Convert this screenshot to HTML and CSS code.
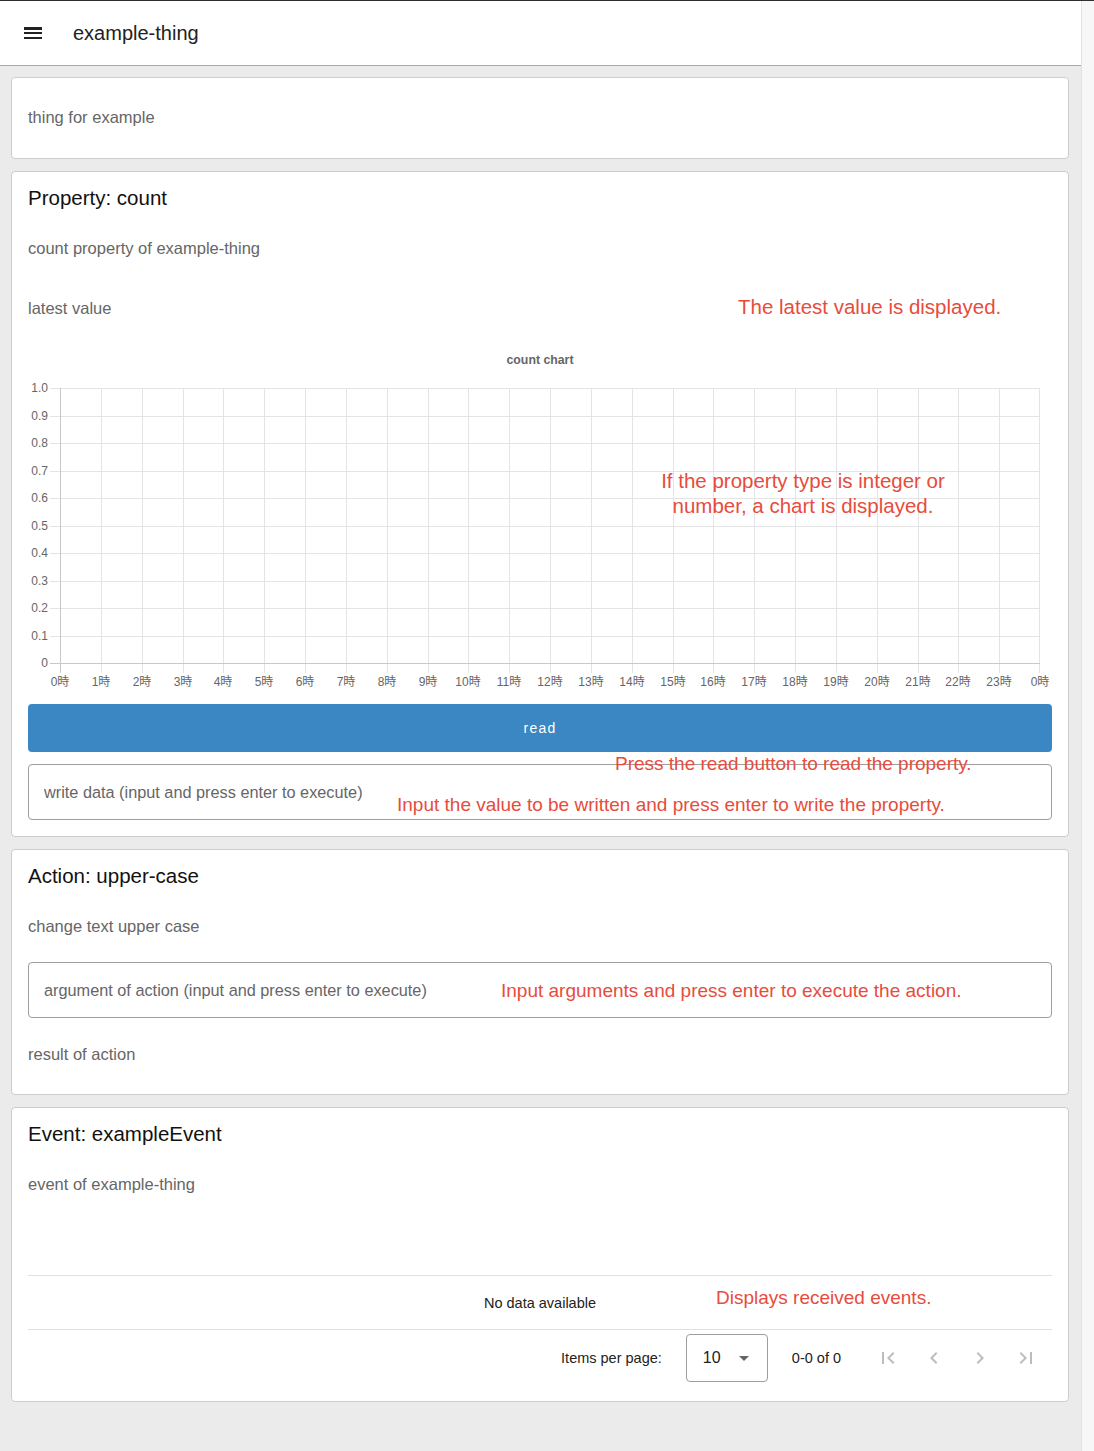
FILE: index.html
```html
<!DOCTYPE html>
<html lang="en">
<head>
<meta charset="utf-8">
<title>example-thing</title>
<link rel="stylesheet" href="styles.css">
</head>
<body>
<div class="app">
  <header class="toolbar">
    <svg class="menu-icon" viewBox="0 0 24 24" width="24" height="24"><path d="M3 18h18v-2H3v2zm0-5h18v-2H3v2zm0-6v2h18V6H3z"/></svg>
    <span class="toolbar-title">example-thing</span>
  </header>
  <main class="main">
    <section class="card card-info">
      <div class="info-desc">thing for example</div>
    </section>

    <section class="card card-prop">
      <h2 class="card-title">Property: count</h2>
      <div class="desc">count property of example-thing</div>
      <div class="latest">latest value</div>
      <svg class="chart" width="1024" height="360" viewBox="0 0 1024 360" shape-rendering="crispEdges">
        <text class="chart-title" x="512" y="24" text-anchor="middle">count chart</text>
        <path class="grid" d="M22 48.5H1012M22 76.5H1012M22 103.5H1012M22 131.5H1012M22 158.5H1012M22 186.5H1012M22 213.5H1012M22 241.5H1012M22 268.5H1012M22 296.5H1012M73.5 48V333M114.5 48V333M155.5 48V333M195.5 48V333M236.5 48V333M277.5 48V333M318.5 48V333M359.5 48V333M400.5 48V333M440.5 48V333M481.5 48V333M522.5 48V333M563.5 48V333M604.5 48V333M645.5 48V333M685.5 48V333M726.5 48V333M767.5 48V333M808.5 48V333M849.5 48V333M890.5 48V333M930.5 48V333M971.5 48V333M1011.5 48V333"/>
        <path class="axis" d="M22 323.5H1012M32.5 48V333"/>
        <g class="ylab" text-anchor="end">
          <text x="20" y="52">1.0</text>
          <text x="20" y="80">0.9</text>
          <text x="20" y="107">0.8</text>
          <text x="20" y="135">0.7</text>
          <text x="20" y="162">0.6</text>
          <text x="20" y="190">0.5</text>
          <text x="20" y="217">0.4</text>
          <text x="20" y="245">0.3</text>
          <text x="20" y="272">0.2</text>
          <text x="20" y="300">0.1</text>
          <text x="20" y="327">0</text>
        </g>
        <g class="xlab" text-anchor="middle">
          <text x="32" y="346">0時</text>
          <text x="73" y="346">1時</text>
          <text x="114" y="346">2時</text>
          <text x="155" y="346">3時</text>
          <text x="195" y="346">4時</text>
          <text x="236" y="346">5時</text>
          <text x="277" y="346">6時</text>
          <text x="318" y="346">7時</text>
          <text x="359" y="346">8時</text>
          <text x="400" y="346">9時</text>
          <text x="440" y="346">10時</text>
          <text x="481" y="346">11時</text>
          <text x="522" y="346">12時</text>
          <text x="563" y="346">13時</text>
          <text x="604" y="346">14時</text>
          <text x="645" y="346">15時</text>
          <text x="685" y="346">16時</text>
          <text x="726" y="346">17時</text>
          <text x="767" y="346">18時</text>
          <text x="808" y="346">19時</text>
          <text x="849" y="346">20時</text>
          <text x="890" y="346">21時</text>
          <text x="930" y="346">22時</text>
          <text x="971" y="346">23時</text>
          <text x="1012" y="346">0時</text>
        </g>
      </svg>
      <button class="read-btn" type="button">read</button>
      <input class="field" type="text" placeholder="write data (input and press enter to execute)">
      <div class="note note-latest">The latest value is displayed.</div>
      <div class="note note-chart">If the property type is integer or<br>number, a chart is displayed.</div>
      <div class="note note-read">Press the read button to read the property.</div>
      <div class="note note-write">Input the value to be written and press enter to write the property.</div>
    </section>

    <section class="card card-action">
      <h2 class="card-title">Action: upper-case</h2>
      <div class="desc">change text upper case</div>
      <input class="field field-action" type="text" placeholder="argument of action (input and press enter to execute)">
      <div class="result">result of action</div>
      <div class="note note-action">Input arguments and press enter to execute the action.</div>
    </section>

    <section class="card card-event">
      <h2 class="card-title">Event: exampleEvent</h2>
      <div class="desc">event of example-thing</div>
      <div class="table">
        <div class="table-head"></div>
        <div class="table-empty">No data available</div>
      </div>
      <div class="paginator">
        <span class="pg-label">Items per page:</span>
        <div class="pg-select">
          <span>10</span>
          <svg width="10" height="5" viewBox="0 0 10 5"><path d="M0 0l5 5 5-5z"/></svg>
        </div>
        <span class="pg-range">0-0 of 0</span>
        <div class="pg-buttons">
          <span class="pg-btn"><svg viewBox="0 0 24 24" width="24" height="24"><path d="M18.41 16.59L13.82 12l4.59-4.59L17 6l-6 6 6 6zM6 6h2v12H6z"/></svg></span>
          <span class="pg-btn"><svg viewBox="0 0 24 24" width="24" height="24"><path d="M15.41 7.41L14 6l-6 6 6 6 1.41-1.41L10.83 12z"/></svg></span>
          <span class="pg-btn"><svg viewBox="0 0 24 24" width="24" height="24"><path d="M10 6L8.59 7.41 13.17 12l-4.58 4.59L10 18l6-6z"/></svg></span>
          <span class="pg-btn"><svg viewBox="0 0 24 24" width="24" height="24"><path d="M5.59 7.41L10.18 12l-4.59 4.59L7 18l6-6-6-6zM16 6h2v12h-2z"/></svg></span>
        </div>
      </div>
      <div class="note note-event">Displays received events.</div>
    </section>
  </main>
</div>
<div class="scrollbar"></div>
</body>
</html>
```
FILE: styles.css
```css
* { box-sizing: border-box; }
html, body { margin: 0; padding: 0; }
body {
  display: flex;
  min-height: 100vh;
  border-top: 1px solid #2e2e2e;
  background: #ebebeb;
  font-family: "Liberation Sans", Arial, "Noto Sans CJK JP", sans-serif;
  color: #222;
}
.app { width: 1081px; flex: none; background: #ebebeb; }
.scrollbar { flex: 1; background: #f7f7f7; border-left: 1px solid #e2e2e2; }

.toolbar {
  height: 65px;
  background: #fff;
  border-bottom: 1px solid #a8a8a8;
  display: flex;
  align-items: center;
  padding-left: 21px;
}
.menu-icon { fill: #222; flex: none; }
.toolbar-title { margin-left: 28px; font-size: 20px; color: #222; }

.main {
  padding: 11px 12px 40px 11px;
  display: flex;
  flex-direction: column;
  gap: 12px;
}
.card {
  position: relative;
  background: #fff;
  border: 1px solid #cdcdcd;
  border-radius: 4px;
  padding: 14px 16px 16px;
}
.card-info { padding: 29px 16px 31px; }
.info-desc, .desc, .latest, .result {
  font-size: 16.5px;
  line-height: 20px;
  color: #666;
}
.card-title {
  margin: 0;
  font-size: 20.5px;
  line-height: 24px;
  font-weight: normal;
  color: #111;
}
.desc { margin-top: 28px; }
.latest { margin-top: 40px; }

.chart { display: block; margin-top: 22px; font-family: "Liberation Sans", Arial, "Noto Sans CJK JP", sans-serif; }
.chart-title { font-size: 12.3px; font-weight: bold; fill: #666; }
.grid { stroke: #e4e4e4; stroke-width: 1; fill: none; }
.axis { stroke: #c8c8c8; stroke-width: 1; fill: none; }
.ylab text, .xlab text { font-size: 12px; fill: #666; }

.read-btn {
  display: block;
  width: 100%;
  height: 48px;
  margin-top: 4px;
  border: none;
  border-radius: 4px;
  background: #3a87c3;
  color: #fff;
  font-family: inherit;
  font-size: 14px;
  letter-spacing: 1.2px;
}
.field {
  display: block;
  width: 100%;
  height: 56px;
  margin-top: 12px;
  border: 1px solid #9e9e9e;
  border-radius: 4px;
  padding: 0 15px;
  font-family: inherit;
  font-size: 16.3px;
  color: #222;
  background: #fff;
}
.field::placeholder { color: #666; }
.field-action { margin-top: 26px; }
.card-action { padding-bottom: 30px; }
.result { margin-top: 26px; }

.card-event { padding-bottom: 15px; }
.table { margin-top: 26px; }
.table-head { height: 56px; border-bottom: 1px solid #e0e0e0; }
.table-empty {
  height: 54px;
  border-bottom: 1px solid #e0e0e0;
  display: flex;
  align-items: center;
  justify-content: center;
  font-size: 14.5px;
  color: #222;
}
.paginator {
  height: 56px;
  display: flex;
  align-items: center;
  justify-content: flex-end;
  padding-right: 6px;
  font-size: 14.5px;
  color: #222;
}
.pg-select {
  width: 82px;
  height: 48px;
  margin-left: 24px;
  border: 1px solid #9e9e9e;
  border-radius: 4px;
  display: flex;
  align-items: center;
  justify-content: space-between;
  padding: 0 18px 0 16px;
  font-size: 16px;
}
.pg-select svg { fill: #666; }
.pg-range { margin-left: 24px; }
.pg-buttons { display: flex; gap: 6px; margin-left: 27px; }
.pg-btn { width: 40px; height: 40px; display: flex; align-items: center; justify-content: center; }
.pg-btn svg { fill: #bdbdbd; }

.note {
  position: absolute;
  color: #e74c3c;
  font-size: 19px;
  line-height: 22px;
  white-space: nowrap;
}
.note-latest { left: 726px; top: 123px; font-size: 20.5px; line-height: 24px; }
.note-chart { left: 579px; top: 296px; width: 424px; text-align: center; font-size: 20.5px; line-height: 25px; }
.note-read { left: 603px; top: 581px; }
.note-write { left: 385px; top: 622px; }
.note-action { left: 489px; top: 130px; }
.note-event { left: 704px; top: 179px; }
```
